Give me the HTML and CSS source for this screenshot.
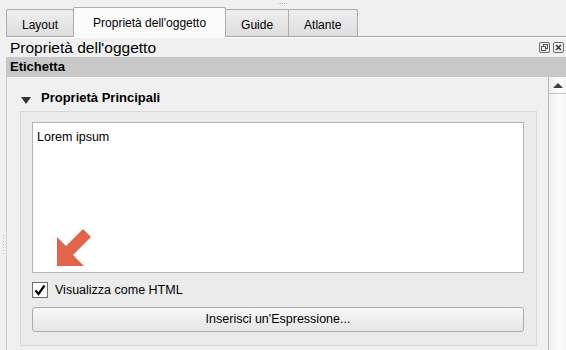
FILE: index.html
```html
<!DOCTYPE html>
<html lang="it">
<head>
  <meta charset="UTF-8">
  <meta name="viewport" content="width=device-width, initial-scale=1.0">
  <title>Proprietà dell'oggetto</title>
  <link rel="stylesheet" href="styles.css">
</head>
<body>
<div class="topgrip"><span></span></div>
<div class="main">
  <div class="gutter"><span></span></div>
  <div class="dock">
    <div class="tabs">
      <div class="tab">Layout</div>
      <div class="tab active">Proprietà dell'oggetto</div>
      <div class="tab">Guide</div>
      <div class="tab wide">Atlante</div>
    </div>
    <div class="dock-title">
      <span>Proprietà dell'oggetto</span>
      <div class="dock-buttons">
        <svg width="11" height="11" viewBox="0 0 11 11">
          <rect x="0.5" y="0.5" width="10" height="10" rx="1.5" fill="none" stroke="#6a6a6a"/>
          <rect x="4.5" y="2.5" width="4" height="4" fill="none" stroke="#555"/>
          <rect x="2.5" y="4.5" width="4" height="4" fill="#f0f0f0" stroke="#555"/>
        </svg>
        <svg width="11" height="11" viewBox="0 0 11 11">
          <rect x="0.5" y="0.5" width="10" height="10" rx="1.5" fill="none" stroke="#6a6a6a"/>
          <path d="M3 3l5 5M8 3l-5 5" stroke="#3a3a3a" stroke-width="1.6"/>
        </svg>
      </div>
    </div>
    <div class="section-bar">Etichetta</div>
    <div class="scroll">
      <div class="content">
        <div class="collapse-head">
          <svg class="caret" width="10" height="7" viewBox="0 0 10 7"><path d="M0 0h10L5 7z" fill="#333"/></svg>
          <span>Proprietà Principali</span>
        </div>
        <div class="group">
          <div class="editor">
            Lorem ipsum
            <svg class="arrow" width="40" height="40" viewBox="0 0 40 40">
              <polygon points="2,9 11,18 28,1 36,9 18,27 29,38 2,38" fill="#e0654a"/>
            </svg>
          </div>
          <div class="check-row">
            <span class="checkbox">
              <svg width="14" height="14" viewBox="0 0 14 14"><path d="M2.5 7.5l3 3.5 6-8.5" fill="none" stroke="#000" stroke-width="2.2"/></svg>
            </span>
            <span>Visualizza come HTML</span>
          </div>
          <div class="button">Inserisci un'Espressione...</div>
        </div>
      </div>
      <div class="scrollbar">
        <div class="sb-up"><svg width="10" height="5" viewBox="0 0 10 5"><path d="M0 5h10L5 0z" fill="#404040"/></svg></div>
      </div>
    </div>
  </div>
</div>
</body>
</html>
```

FILE: styles.css
```css
* {
  box-sizing: border-box;
}
body {
  margin: 0;
  width: 566px;
  height: 350px;
  overflow: hidden;
  background-color: #f0f0f0;
  font-family: "Liberation Sans", Arial, sans-serif;
  font-size: 12px;
  color: #000000;
}
.topgrip {
  height: 7px;
  display: flex;
  justify-content: center;
  padding-top: 3px;
}
.topgrip span {
  width: 10px;
  height: 1px;
  background: repeating-linear-gradient(90deg, #b4b4b4 0 1px, transparent 1px 2px);
}
.main {
  display: flex;
  height: 343px;
}
.gutter {
  width: 6px;
  display: flex;
  flex-direction: column;
  align-items: center;
  padding-top: 228px;
}
.gutter span {
  width: 1px;
  height: 20px;
  background: repeating-linear-gradient(#b4b4b4 0 1px, transparent 1px 3px);
}
.dock {
  flex: 1;
  min-width: 0;
  display: flex;
  flex-direction: column;
}
.tabs {
  height: 30px;
  display: flex;
  align-items: flex-end;
  border-bottom: 1px solid #a8a8a8;
}
.tab {
  height: 27px;
  padding: 8px 15px 0;
  line-height: 14px;
  border: 1px solid #acacac;
  border-bottom: 0;
  border-radius: 2px 2px 0 0;
  margin-right: -1px;
  background: linear-gradient(#eeeeee, #dedede);
  white-space: nowrap;
}
.tab.active {
  height: 30px;
  padding: 8px 19px 0;
  margin-bottom: -1px;
  background: #fbfbfb;
  position: relative;
}
.tab.wide {
  padding: 8px 16px 0 15px;
}
.dock-title {
  height: 20px;
  display: flex;
  align-items: center;
  border-top: 1px solid #ffffff;
  padding: 0 2px 0 4px;
  font-size: 15.5px;
}
.dock-buttons {
  margin-left: auto;
  display: flex;
  gap: 3px;
}
.dock-buttons svg {
  display: block;
}
.section-bar {
  height: 20px;
  line-height: 20px;
  background-color: #c8c8c8;
  padding-left: 4px;
  font-weight: bold;
  font-size: 13px;
}
.scroll {
  flex: 1;
  min-height: 0;
  display: flex;
  border-left: 1px solid #cfcfcf;
  overflow: hidden;
}
.content {
  flex: 1;
  padding: 0 11px 0 13px;
}
.collapse-head {
  height: 34px;
  display: flex;
  align-items: flex-start;
  padding-top: 13px;
  line-height: 16px;
  font-weight: bold;
  font-size: 13px;
}
.caret {
  margin: 7px 10px 0 1px;
}
.group {
  display: flex;
  flex-direction: column;
  border: 1px solid #d8d8d8;
  background-color: #ebebeb;
  padding: 10px 12px 13px 11px;
}
.editor {
  position: relative;
  height: 151px;
  border: 1px solid #b4b4b4;
  background-color: #ffffff;
  padding: 7px 4px 6px;
  font-size: 12.5px;
  line-height: 15px;
}
.arrow {
  position: absolute;
  left: 22px;
  top: 105px;
}
.check-row {
  display: flex;
  align-items: center;
  gap: 7px;
  margin-top: 9px;
  height: 16px;
  font-size: 12.5px;
}
.checkbox {
  width: 16px;
  height: 16px;
  border: 1px solid #6e6e6e;
  background-color: #ffffff;
  display: flex;
  align-items: center;
  justify-content: center;
}
.button {
  margin-top: 9px;
  height: 25px;
  line-height: 23px;
  text-align: center;
  border: 1px solid #adadad;
  border-radius: 3px;
  background: linear-gradient(#f7f7f7, #e6e6e6);
  font-size: 12.5px;
}
.scrollbar {
  width: 18px;
  border-left: 1px solid #b8b8b8;
  background: linear-gradient(90deg, #eeeeee, #fdfdfd 60%, #f6f6f6);
}
.sb-up {
  height: 17px;
  border-bottom: 1px solid #c4c4c4;
  display: flex;
  align-items: center;
  justify-content: center;
}
.sb-up svg {
  display: block;
}
```
